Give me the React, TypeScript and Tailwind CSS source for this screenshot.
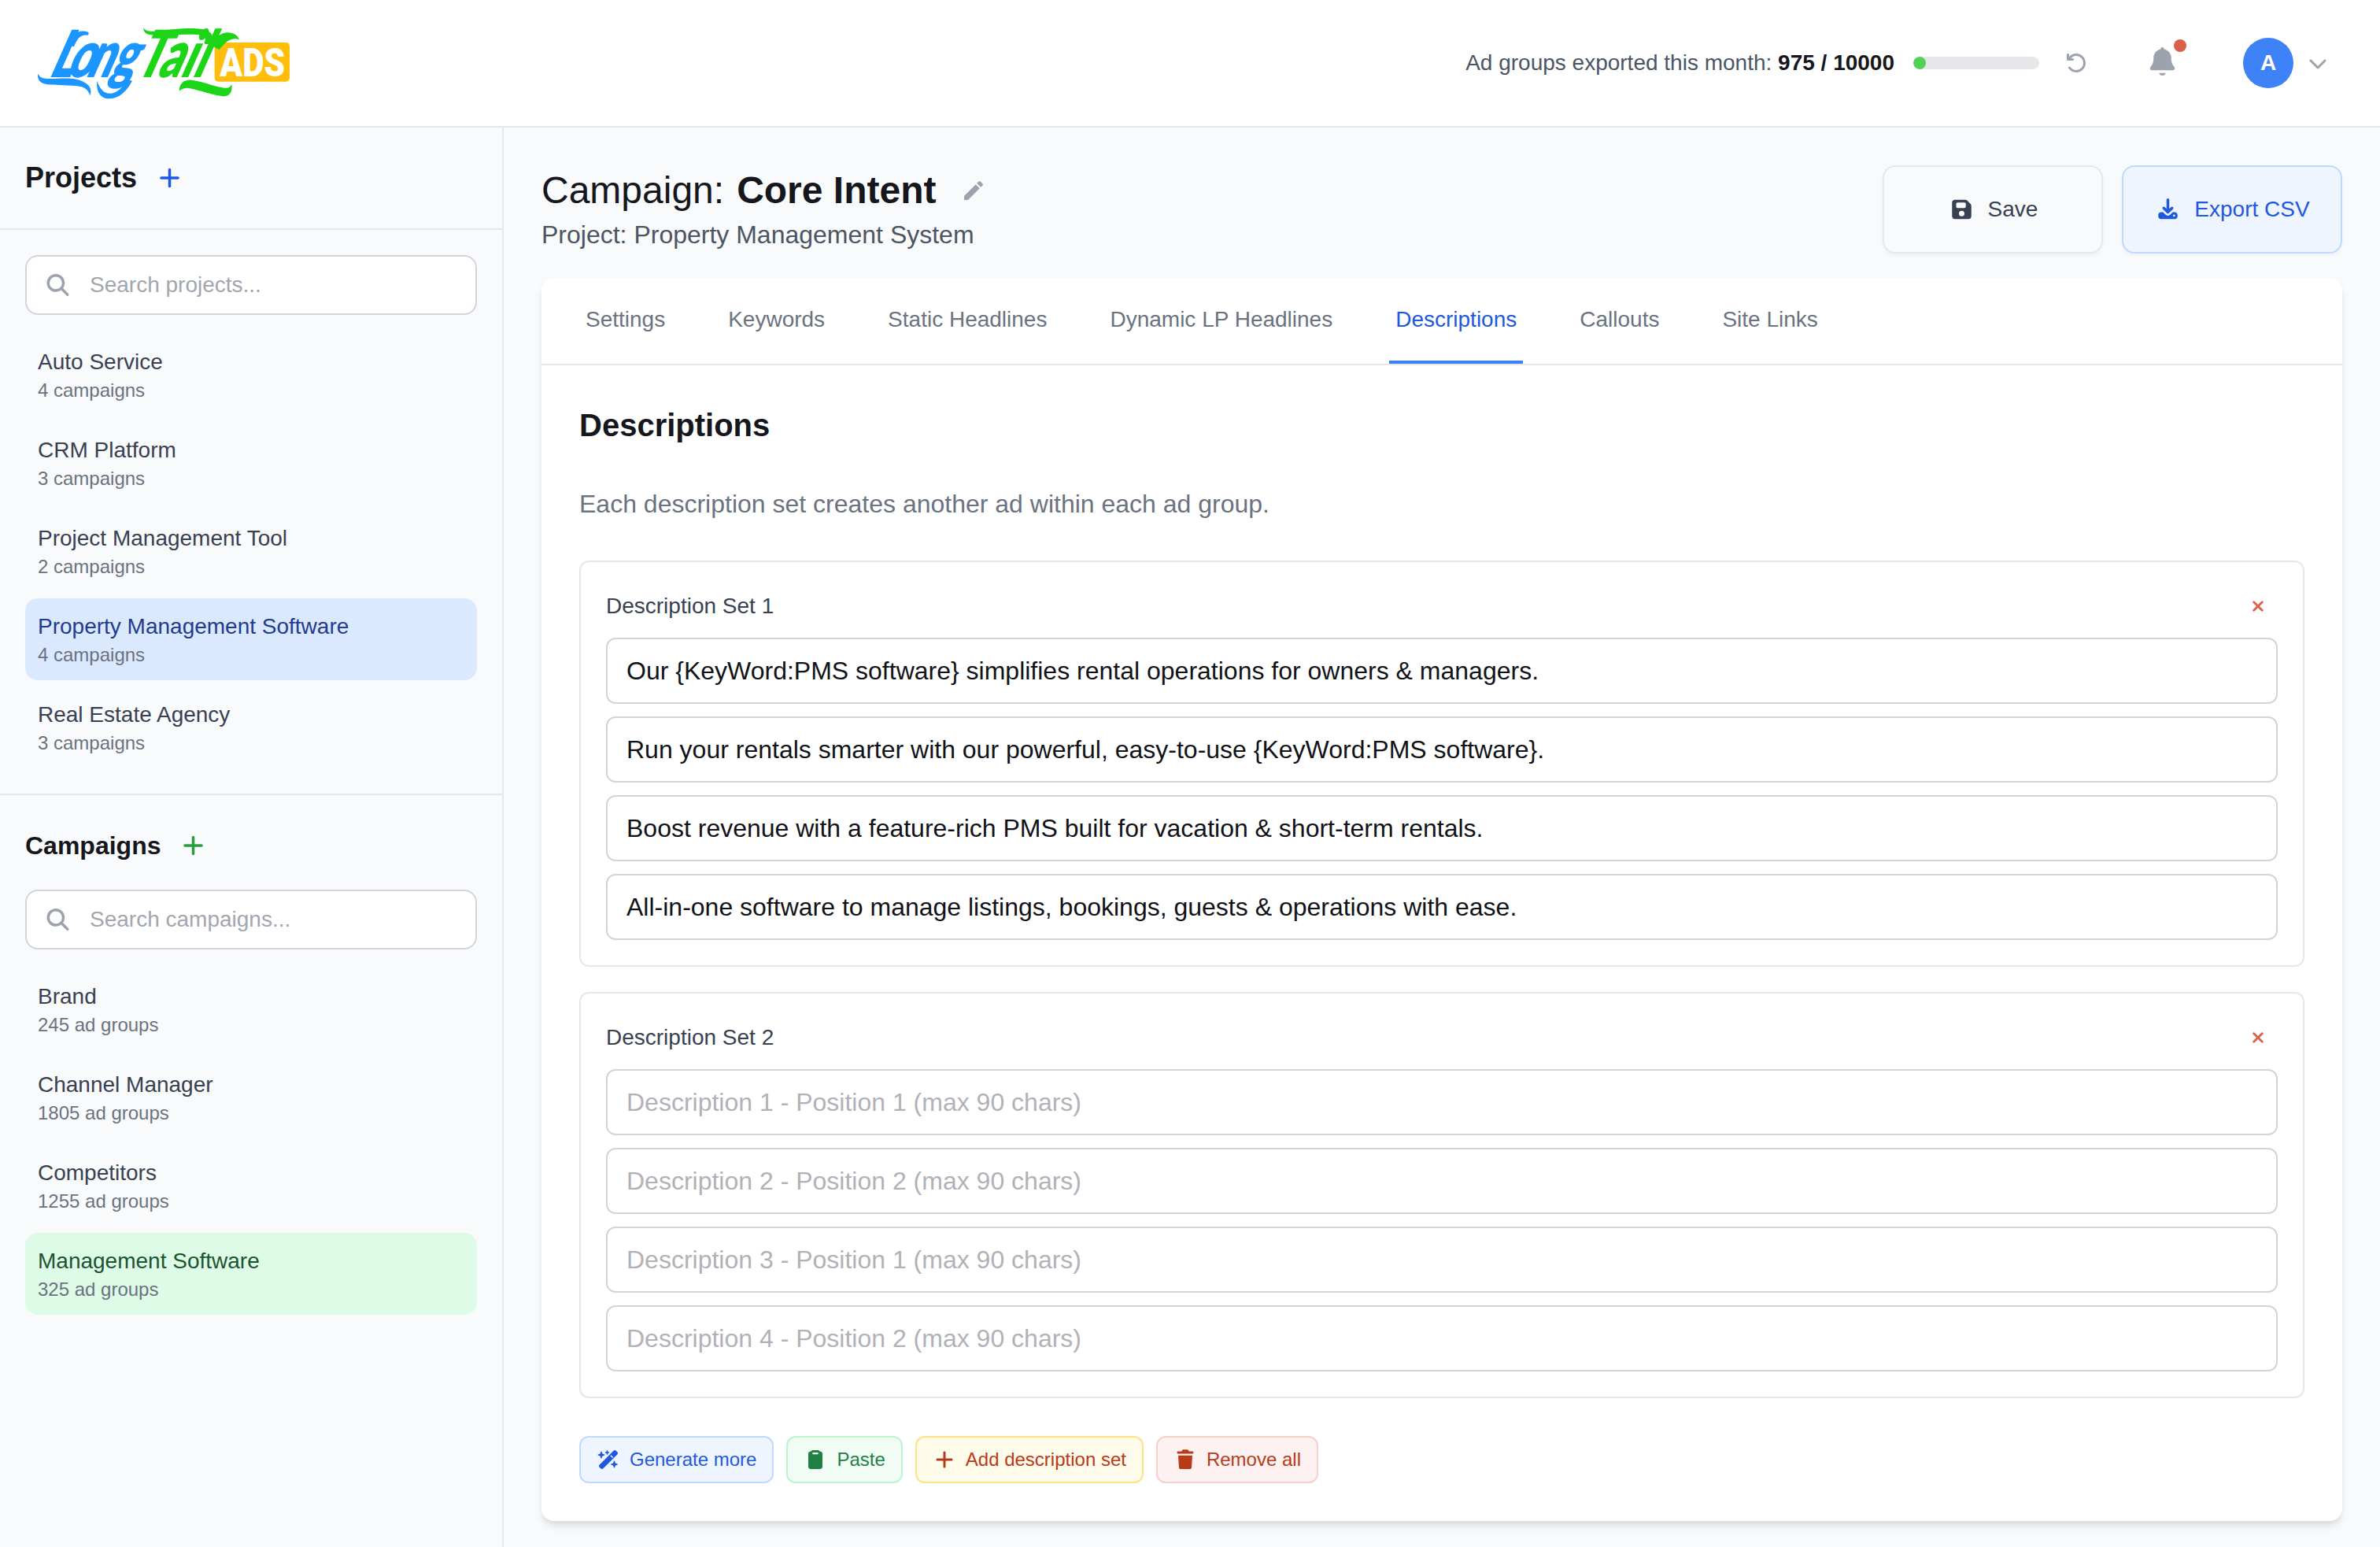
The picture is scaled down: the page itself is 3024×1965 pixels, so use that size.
import { useState } from 'react'
import { clsx } from 'clsx'
import { MdEdit } from 'react-icons/md'

const icons = {
  plus: {
    w: 448,
    d: 'M256 64c0-17.7-14.3-32-32-32s-32 14.3-32 32l0 160-160 0c-17.7 0-32 14.3-32 32s14.3 32 32 32l160 0 0 160c0 17.7 14.3 32 32 32s32-14.3 32-32l0-160 160 0c17.7 0 32-14.3 32-32s-14.3-32-32-32l-160 0 0-160z',
  },
  search: {
    w: 512,
    d: 'M416 208c0 45.9-14.9 88.3-40 122.7L502.6 457.4c12.5 12.5 12.5 32.8 0 45.3s-32.8 12.5-45.3 0L330.7 376C296.3 401.1 253.9 416 208 416 93.1 416 0 322.9 0 208S93.1 0 208 0 416 93.1 416 208zM208 352a144 144 0 1 0 0-288 144 144 0 1 0 0 288z',
  },
  bell: {
    w: 448,
    d: 'M224 0c-17.7 0-32 14.3-32 32l0 3.2C119 50 64 114.6 64 192l0 21.7c0 48.1-16.4 94.8-46.4 132.4L7.8 358.3C2.7 364.6 0 372.4 0 380.5 0 400.1 15.9 416 35.5 416l376.9 0c19.6 0 35.5-15.9 35.5-35.5 0-8.1-2.7-15.9-7.8-22.2l-9.8-12.2C400.4 308.5 384 261.8 384 213.7l0-21.7c0-77.4-55-142-128-156.8l0-3.2c0-17.7-14.3-32-32-32zM162 464c7.1 27.6 32.2 48 62 48s54.9-20.4 62-48l-124 0z',
  },
  undo: {
    w: 512,
    d: 'M256 64c-56.8 0-107.9 24.7-143.1 64l47.1 0c17.7 0 32 14.3 32 32s-14.3 32-32 32L32 192c-17.7 0-32-14.3-32-32L0 32C0 14.3 14.3 0 32 0S64 14.3 64 32l0 54.7C110.9 33.6 179.5 0 256 0 397.4 0 512 114.6 512 256S397.4 512 256 512c-87 0-163.9-43.4-210.1-109.7-10.1-14.5-6.6-34.4 7.9-44.6s34.4-6.6 44.6 7.9c34.8 49.8 92.4 82.3 157.6 82.3 106 0 192-86 192-192S362 64 256 64z',
  },
  chevron: {
    w: 448,
    d: 'M201.4 406.6c12.5 12.5 32.8 12.5 45.3 0l192-192c12.5-12.5 12.5-32.8 0-45.3s-32.8-12.5-45.3 0L224 338.7 54.6 169.4c-12.5-12.5-32.8-12.5-45.3 0s-12.5 32.8 0 45.3l192 192z',
  },
  save: {
    w: 448,
    d: 'M64 32C28.7 32 0 60.7 0 96L0 416c0 35.3 28.7 64 64 64l320 0c35.3 0 64-28.7 64-64l0-242.7c0-17-6.7-33.3-18.7-45.3L352 50.7C340 38.7 323.7 32 306.7 32L64 32zm32 96c0-17.7 14.3-32 32-32l160 0c17.7 0 32 14.3 32 32l0 64c0 17.7-14.3 32-32 32l-160 0c-17.7 0-32-14.3-32-32l0-64zM224 288a64 64 0 1 1 0 128 64 64 0 1 1 0-128z',
  },
  download: {
    w: 448,
    d: 'M256 32c0-17.7-14.3-32-32-32s-32 14.3-32 32l0 210.7-41.4-41.4c-12.5-12.5-32.8-12.5-45.3 0s-12.5 32.8 0 45.3l96 96c12.5 12.5 32.8 12.5 45.3 0l96-96c12.5-12.5 12.5-32.8 0-45.3s-32.8-12.5-45.3 0L256 242.7 256 32zM64 320c-35.3 0-64 28.7-64 64l0 32c0 35.3 28.7 64 64 64l320 0c35.3 0 64-28.7 64-64l0-32c0-35.3-28.7-64-64-64l-46.9 0-56.6 56.6c-31.2 31.2-81.9 31.2-113.1 0L110.9 320 64 320zm304 56a24 24 0 1 1 0 48 24 24 0 1 1 0-48z',
  },
  wand: {
    w: 576,
    d: 'M234.7 42.7L197 56.8c-3 1.1-5 4-5 7.2s2 6.1 5 7.2l37.7 14.1L248.8 123c1.1 3 4 5 7.2 5s6.1-2 7.2-5l14.1-37.7L315 71.2c3-1.1 5-4 5-7.2s-2-6.1-5-7.2L277.3 42.7 263.2 5c-1.1-3-4-5-7.2-5s-6.1 2-7.2 5L234.7 42.7zM46.1 395.4c-18.7 18.7-18.7 49.1 0 67.9l34.6 34.6c18.7 18.7 49.1 18.7 67.9 0L529.9 116.5c18.7-18.7 18.7-49.1 0-67.9L495.3 14.1c-18.7-18.7-49.1-18.7-67.9 0L46.1 395.4zM360 132l60 60-22 22-60-60 22-22zM7.5 117.2C3 118.9 0 123.2 0 128s3 9.1 7.5 10.8L64 160l21.2 56.5c1.7 4.5 6 7.5 10.8 7.5s9.1-3 10.8-7.5L128 160l56.5-21.2c4.5-1.7 7.5-6 7.5-10.8s-3-9.1-7.5-10.8L128 96 106.8 39.5C105.1 35 100.8 32 96 32s-9.1 3-10.8 7.5L64 96 7.5 117.2zm352 256c-4.5 1.7-7.5 6-7.5 10.8s3 9.1 7.5 10.8L416 416l21.2 56.5c1.7 4.5 6 7.5 10.8 7.5s9.1-3 10.8-7.5L480 416l56.5-21.2c4.5-1.7 7.5-6 7.5-10.8s-3-9.1-7.5-10.8L480 352l-21.2-56.5c-1.7-4.5-6-7.5-10.8-7.5s-9.1 3-10.8 7.5L416 352l-56.5 21.2z',
  },
  clipboard: {
    w: 384,
    d: 'M320 32l-8.6 0C300.4 12.9 279.7 0 256 0L128 0C104.3 0 83.6 12.9 72.6 32L64 32C28.7 32 0 60.7 0 96L0 448c0 35.3 28.7 64 64 64l256 0c35.3 0 64-28.7 64-64l0-352c0-35.3-28.7-64-64-64zM136 112c-13.3 0-24-10.7-24-24s10.7-24 24-24l112 0c13.3 0 24 10.7 24 24s-10.7 24-24 24l-112 0z',
  },
  trash: {
    w: 448,
    d: 'M136.7 5.9L128 32 32 32C14.3 32 0 46.3 0 64S14.3 96 32 96l384 0c17.7 0 32-14.3 32-32s-14.3-32-32-32l-96 0-8.7-26.1C306.9-7.2 294.7-16 280.9-16L167.1-16c-13.8 0-26 8.8-30.4 21.9zM416 144L32 144 53.1 467.1C54.7 492.4 75.7 512 101 512L347 512c25.3 0 46.3-19.6 47.9-44.9L416 144z',
  },
}

type IconName = keyof typeof icons

// Every icon sits in a box 1.25em wide and 1em high
function Icon({ name, className }: { name: IconName; className?: string }) {
  const { w, d } = icons[name]
  return (
    <svg
      className={clsx('h-[1em] w-[1.25em] shrink-0 overflow-visible', className)}
      viewBox={`${w / 2 - 320} 0 640 512`}
      fill="currentColor"
    >
      <path fillRule="evenodd" d={d} />
    </svg>
  )
}

function Logo() {
  return (
    <svg className="h-[90px] w-[320px] overflow-visible" viewBox="24 33 960 270">
      <rect x="698" y="90" width="286" height="149" rx="14" fill="#ffbd0c" />
      <text x="718" y="219" fontSize="152" textLength="248" lengthAdjust="spacingAndGlyphs" fontWeight="900" fill="#fff" className="font-[Roboto,sans-serif]">
        ADS
      </text>

      <g fill="#1b95ff">
        <text x="90 186 298 434" transform="translate(0 222) skewX(-24) scale(.68 1)" fontSize="248" fontWeight="800" className="font-[Lato,sans-serif]">
          Long
        </text>
        <path d="M24 208c6 14 16 20 40 20 60 0 100-8 138 14 22 12 28 28 22 50-10-24-24-34-50-36-50-4-88-4-114-6-26-4-38-16-36-42z" />
        <path d="M250 236c10 32 28 50 54 48 26-4 44-24 60-54l20 6c-22 42-52 68-88 68-34 0-50-28-46-68z" />
        <path d="M134 100c20-44 46-62 82-50 4 4 2 12-4 12-26-2-38 14-50 44z" />
      </g>

      <g fill="#1cd517">
        <text x="572 698 826 896" transform="translate(0 222) skewX(-24) scale(.68 1)" fontSize="248" fontWeight="800" className="font-[Lato,sans-serif]">
          Tail
        </text>
        <path d="M426 34c10 14 28 16 60 12 70-10 130-14 168-6 32 8 44 26 30 46-6 10-18 14-26 6 12-22 2-30-28-32-60-2-110 2-160 2-30 0-42-8-44-28z" />
        <path d="M684 100c16-36 50-54 78-46 18 4 26 14 30 24-30-8-50 6-76 40z" />
        <path d="M563 275c0-28 18-44 46-42 42 4 84 24 126 30 16 2 24-4 28-14 4 30-8 48-34 46-50-6-92-26-134-32-14 0-22 4-32 12z" />
      </g>
    </svg>
  )
}

const projects = [
  { name: 'Auto Service', count: '4 campaigns' },
  { name: 'CRM Platform', count: '3 campaigns' },
  { name: 'Project Management Tool', count: '2 campaigns' },
  { name: 'Property Management Software', count: '4 campaigns' },
  { name: 'Real Estate Agency', count: '3 campaigns' },
]

const campaigns = [
  { name: 'Brand', count: '245 ad groups' },
  { name: 'Channel Manager', count: '1805 ad groups' },
  { name: 'Competitors', count: '1255 ad groups' },
  { name: 'Management Software', count: '325 ad groups' },
]

const tabs = ['Settings', 'Keywords', 'Static Headlines', 'Dynamic LP Headlines', 'Descriptions', 'Callouts', 'Site Links']

const descriptionSets = [
  [
    'Our {KeyWord:PMS software} simplifies rental operations for owners & managers.',
    'Run your rentals smarter with our powerful, easy-to-use {KeyWord:PMS software}.',
    'Boost revenue with a feature-rich PMS built for vacation & short-term rentals.',
    'All-in-one software to manage listings, bookings, guests & operations with ease.',
  ],
  ['', '', '', ''],
]

function Header() {
  const exported = 975
  const limit = 10000

  return (
    <header className="flex h-[162px] shrink-0 items-center justify-between border-b-2 border-[#e5e7eb] bg-white pr-16 pl-12">
      <Logo />
      <div className="flex items-center text-[28px] leading-10">
        <span className="text-[#4b5563]">
          Ad groups exported this month: <b className="font-bold text-[#16171c]">{exported} / {limit}</b>
        </span>
        <div className="ml-6 h-4 w-40 overflow-hidden rounded-full bg-[#e5e7eb]">
          <div className="h-full rounded-full bg-[#50d254]" style={{ width: `${(exported / limit) * 100}%` }} />
        </div>
        <button className="ml-8 text-[24px] text-[#9ca3af]">
          <Icon name="undo" />
        </button>
        <button className="relative ml-[72px] text-[36px] text-[#9ca3af]">
          <Icon name="bell" className="-mt-1" />
          <span className="absolute -top-[14px] -right-2 size-4 rounded-full bg-[#da604a]" />
        </button>
        <button className="ml-20 flex items-center gap-4">
          <span className="flex size-16 items-center justify-center rounded-full bg-[#3d83f7] font-bold text-white">A</span>
          <Icon name="chevron" className="text-[24px] text-[#9ca3af]" />
        </button>
      </div>
    </header>
  )
}

function SearchBox({ placeholder }: { placeholder: string }) {
  return (
    <label className="flex h-[76px] items-center rounded-2xl border-2 border-[#d1d5db] bg-white pl-[22px] text-[28px]">
      <Icon name="search" className="text-[#9ca3af]" />
      <input className="ml-[23px] flex-1 outline-none placeholder:text-[#a1a6af]" placeholder={placeholder} />
    </label>
  )
}

interface ItemListProps {
  items: { name: string; count: string }[]
  selected: string
  onSelect: (name: string) => void
  activeClass: string
}

function ItemList({ items, selected, onSelect, activeClass }: ItemListProps) {
  return (
    <div className="mt-6 space-y-2">
      {items.map((item) => (
        <button
          key={item.name}
          onClick={() => onSelect(item.name)}
          className={clsx('block w-full rounded-2xl p-4 text-left', item.name === selected ? activeClass : 'text-[#374151]')}
        >
          <div className="text-[28px] leading-10">{item.name}</div>
          <div className="text-[24px] leading-8 text-[#6b7280]">{item.count}</div>
        </button>
      ))}
    </div>
  )
}

function Sidebar() {
  const [project, setProject] = useState('Property Management Software')
  const [campaign, setCampaign] = useState('Management Software')

  return (
    <aside className="w-[640px] shrink-0 border-r-2 border-[#e5e7eb]">
      <div className="border-b-2 border-[#e5e7eb] p-8">
        <div className="flex h-16 items-center text-[#16171c]">
          <h2 className="text-[36px] font-bold">Projects</h2>
          <Icon name="plus" className="ml-6 text-[28px] text-[#2158e0]" />
        </div>
      </div>
      <div className="border-b-2 border-[#e5e7eb] p-8">
        <SearchBox placeholder="Search projects..." />
        <ItemList items={projects} selected={project} onSelect={setProject} activeClass="bg-[#dbe9fe] text-[#233a8f]" />
      </div>
      <div className="p-8">
        <div className="mb-6 flex h-16 items-center text-[#16171c]">
          <h2 className="text-[32px] font-bold">Campaigns</h2>
          <Icon name="plus" className="ml-6 text-[28px] text-[#2a9d3f]" />
        </div>
        <SearchBox placeholder="Search campaigns..." />
        <ItemList items={campaigns} selected={campaign} onSelect={setCampaign} activeClass="bg-[#ddfbe7] text-[#1c5430]" />
      </div>
    </aside>
  )
}

function DescriptionSet({ index, values }: { index: number; values: string[] }) {
  return (
    <div className="rounded-xl border-2 border-[#e5e7eb] p-8">
      <div className="mb-4 flex h-12 items-center justify-between">
        <span className="text-[28px] text-[#374151]">Description Set {index + 1}</span>
        <button className="mr-[18px] text-[#dc5f47]">
          <svg className="size-[14px]" viewBox="0 0 14 14" fill="none" stroke="currentColor" strokeWidth="2.8" strokeLinecap="round">
            <path d="M1.7 1.7l10.6 10.6M12.3 1.7L1.7 12.3" />
          </svg>
        </button>
      </div>
      <div className="space-y-4">
        {values.map((value, i) => (
          <input
            key={i}
            className="block h-[84px] w-full rounded-xl border-2 border-[#d1d5db] px-6 text-[32px] text-[#111217] outline-none placeholder:text-[#b0b2b7]"
            defaultValue={value}
            placeholder={`Description ${i + 1} - Position ${(i % 2) + 1} (max 90 chars)`}
          />
        ))}
      </div>
    </div>
  )
}

function ActionButton({ icon, label, className }: { icon: IconName; label: string; className: string }) {
  return (
    <button className={clsx('flex h-[60px] items-center gap-3 rounded-xl border-2 px-5 text-[24px]', className)}>
      <Icon name={icon} />
      {label}
    </button>
  )
}

export default function App() {
  const [activeTab, setActiveTab] = useState('Descriptions')

  return (
    <div className="flex h-[1965px] w-[3024px] flex-col overflow-hidden bg-[#f9fafc] font-['Liberation_Sans',Arial,sans-serif]">
      <Header />
      <div className="flex min-h-0 flex-1">
        <Sidebar />

        <main className="flex-1 p-12">
          {/* Campaign title and page actions */}
          <div className="flex justify-between">
            <div>
              <div className="flex items-center text-[48px] leading-[64px] text-[#16171c]">
                <span>Campaign:</span>
                <h1 className="ml-4 font-bold">Core Intent</h1>
                <MdEdit className="ml-8 size-8 text-[#9ca3af]" />
              </div>
              <p className="text-[32px] leading-[48px] text-[#4b5563]">Project: Property Management System</p>
            </div>
            <div className="flex gap-6 text-[28px]">
              <button className="flex h-28 w-[280px] items-center justify-center gap-4 rounded-2xl border-2 border-[#e5e7eb] bg-[#f9fafc] text-[#374151] shadow-[0_2px_4px_rgba(0,0,0,0.05)]">
                <Icon name="save" />
                Save
              </button>
              <button className="flex h-28 w-[280px] items-center justify-center gap-4 rounded-2xl border-2 border-[#bfdafe] bg-[#eff5ff] text-[#2158e0] shadow-[0_2px_4px_rgba(0,0,0,0.05)]">
                <Icon name="download" />
                Export CSV
              </button>
            </div>
          </div>

          <div className="mt-8 rounded-2xl bg-white shadow-[0_8px_12px_-2px_rgba(0,0,0,0.1),0_4px_8px_-4px_rgba(0,0,0,0.1)]">
            {/* Tabs */}
            <nav className="flex gap-16 border-b-2 border-[#e5e7eb] px-12">
              {tabs.map((tab) => (
                <button
                  key={tab}
                  onClick={() => setActiveTab(tab)}
                  className={clsx(
                    'border-b-4 px-2 py-8 text-[28px] leading-10',
                    tab === activeTab ? 'border-[#3d83f7] text-[#2158e0]' : 'border-transparent text-[#6b7280]'
                  )}
                >
                  {tab}
                </button>
              ))}
            </nav>

            <div className="p-12">
              <h2 className="text-[40px] leading-[56px] font-bold text-[#16171c]">Descriptions</h2>
              <p className="my-12 text-[32px] leading-[48px] text-[#6b7280]">
                Each description set creates another ad within each ad group.
              </p>

              <div className="space-y-8">
                {descriptionSets.map((values, i) => (
                  <DescriptionSet key={i} index={i} values={values} />
                ))}
              </div>

              <div className="mt-12 flex gap-4">
                <ActionButton icon="wand" label="Generate more" className="border-[#bfdafe] bg-[#eff5ff] text-[#2158e0]" />
                <ActionButton icon="clipboard" label="Paste" className="border-[#b9f6cd] bg-[#f1fcf4] text-[#238044]" />
                <ActionButton icon="plus" label="Add description set" className="border-[#fde385] bg-[#fffbeb] text-[#b83a18]" />
                <ActionButton icon="trash" label="Remove all" className="border-[#f8cfc9] bg-[#fdf2f1] text-[#b83a18]" />
              </div>
            </div>
          </div>
        </main>
      </div>
    </div>
  )
}
